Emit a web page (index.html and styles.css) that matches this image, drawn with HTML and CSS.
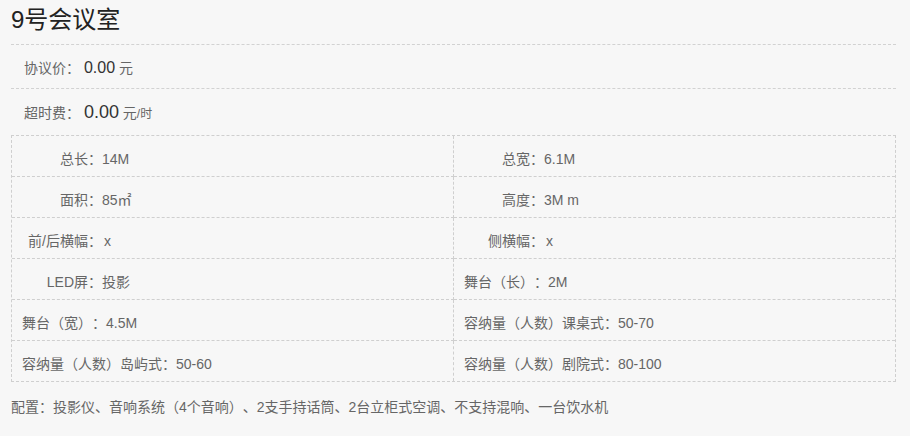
FILE: index.html
```html
<!DOCTYPE html>
<html lang="zh-CN">
<head>
<meta charset="utf-8">
<title>9号会议室</title>
<link rel="stylesheet" href="styles.css">
</head>
<body>
<div class="room">
  <h1 class="room-title">9号会议室</h1>
  <div class="price-row price-row--first"><span class="price-label">协议价：</span> <span class="price-num">0.00</span> <span class="unit">元</span></div>
  <div class="price-row price-row--over"><span class="price-label">超时费：</span> <span class="price-num price-num--big">0.00</span> <span class="unit">元</span><span class="unit-small">/时</span></div>
  <div class="spec-grid">
    <div class="spec-cell"><span class="spec-label">总长：</span><span class="spec-value">14M</span></div>
    <div class="spec-cell"><span class="spec-label">总宽：</span><span class="spec-value">6.1M</span></div>
    <div class="spec-cell"><span class="spec-label">面积：</span><span class="spec-value">85㎡</span></div>
    <div class="spec-cell"><span class="spec-label">高度：</span><span class="spec-value">3M m</span></div>
    <div class="spec-cell"><span class="spec-label">前/后横幅：</span><span class="spec-value spec-value--x">x</span></div>
    <div class="spec-cell"><span class="spec-label">侧横幅：</span><span class="spec-value spec-value--x">x</span></div>
    <div class="spec-cell"><span class="spec-label">LED屏：</span><span class="spec-value">投影</span></div>
    <div class="spec-cell"><span class="spec-label">舞台（长）：</span><span class="spec-value">2M</span></div>
    <div class="spec-cell"><span class="spec-label">舞台（宽）：</span><span class="spec-value">4.5M</span></div>
    <div class="spec-cell"><span class="spec-label">容纳量（人数）课桌式：</span><span class="spec-value">50-70</span></div>
    <div class="spec-cell"><span class="spec-label">容纳量（人数）岛屿式：</span><span class="spec-value">50-60</span></div>
    <div class="spec-cell"><span class="spec-label">容纳量（人数）剧院式：</span><span class="spec-value">80-100</span></div>
  </div>
  <p class="config">配置：投影仪、音响系统（4个音响）、2支手持话筒、2台立柜式空调、不支持混响、一台饮水机</p>
</div>
</body>
</html>
```

FILE: styles.css
```css
html, body {
  margin: 0;
  padding: 0;
  background: #f7f7f7;
}

body {
  font-family: "Liberation Sans", "Noto Sans CJK SC", sans-serif;
  font-size: 14px;
  color: #666;
  text-spacing-trim: space-all;
}

.room {
  width: 885px;
  margin: 0 14px 0 11px;
  padding-top: 5px;
}

.room-title {
  margin: 0;
  font-size: 24px;
  font-weight: normal;
  line-height: 30px;
  color: #222;
  padding-bottom: 9px;
  border-bottom: 1px dashed #d2d2d2;
}

.price-row {
  box-sizing: border-box;
  padding: 11px 0 0 13px;
  line-height: 24px;
  white-space: nowrap;
}

.price-row--first {
  height: 44px;
  border-bottom: 1px dashed #d2d2d2;
}

.price-row--over {
  height: 46px;
}

.price-label {
  color: #666;
}

.price-num {
  font-size: 16px;
  color: #333;
}

.price-num--big {
  font-size: 18px;
}

.unit {
  color: #666;
}

.unit-small {
  font-size: 12px;
  color: #666;
}

.spec-grid {
  display: grid;
  grid-template-columns: 442px 1fr;
  border: 1px dashed #cfcfcf;
}

.spec-cell {
  box-sizing: border-box;
  height: 41px;
  padding: 8px 0 0 10px;
  line-height: 30px;
  border-bottom: 1px dashed #cfcfcf;
  white-space: nowrap;
  color: #666;
}

.spec-cell:nth-child(odd) {
  border-right: 1px dashed #cfcfcf;
}

.spec-cell:nth-last-child(-n+2) {
  height: 40px;
  border-bottom: none;
}

.spec-label {
  display: inline-block;
  min-width: 80px;
  text-align: right;
}

.spec-value--x {
  padding-left: 2px;
}

.config {
  margin: 13px 0 0;
  line-height: 24px;
  color: #666;
  white-space: nowrap;
}
```
